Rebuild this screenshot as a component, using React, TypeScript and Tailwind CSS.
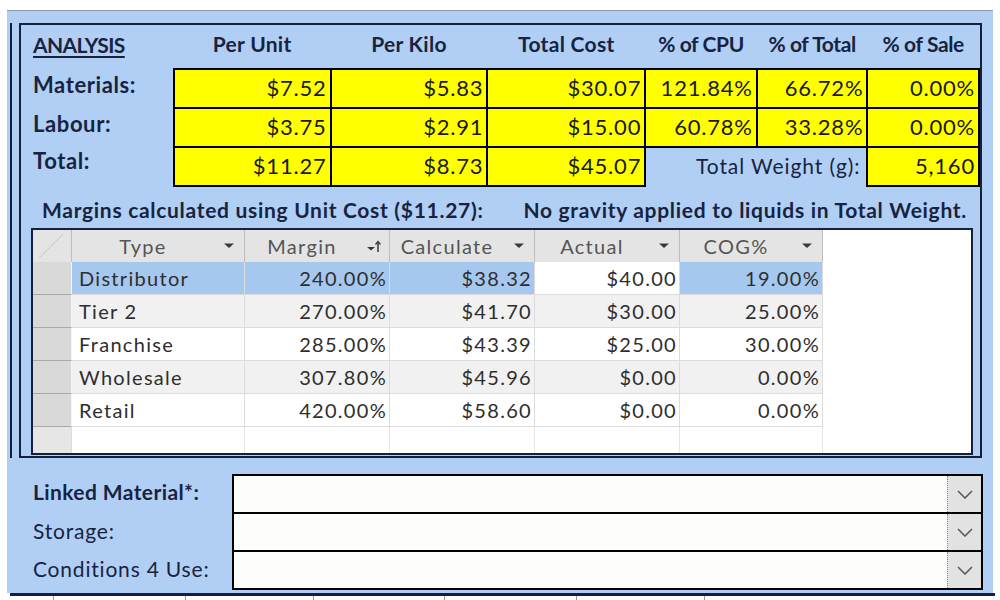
import React from 'react'

const rows = [
  { type: 'Distributor', margin: '240.00%', calc: '$38.32', actual: '$40.00', cog: '19.00%' },
  { type: 'Tier 2', margin: '270.00%', calc: '$41.70', actual: '$30.00', cog: '25.00%' },
  { type: 'Franchise', margin: '285.00%', calc: '$43.39', actual: '$25.00', cog: '30.00%' },
  { type: 'Wholesale', margin: '307.80%', calc: '$45.96', actual: '$0.00', cog: '0.00%' },
  { type: 'Retail', margin: '420.00%', calc: '$58.60', actual: '$0.00', cog: '0.00%' },
]

function Yellow({ children }: { children: React.ReactNode }) {
  return (
    <td className="border-2 border-black bg-[#ffff00] text-right pr-[3px] pb-[2px] text-[22px] font-normal text-[#1a1a1a] tracking-[0.8px]">
      {children}
    </td>
  )
}

function FilterArrow() {
  return (
    <svg width="10" height="6" viewBox="0 0 10 6">
      <polygon points="0,0.5 10,0.5 5,5" fill="#3a3a3a" />
    </svg>
  )
}

function SortArrow() {
  return (
    <svg width="14" height="14" viewBox="0 0 14 14">
      <polygon points="0,8 8,8 4,11.5" fill="#3a3a3a" />
      <line x1="11" y1="3" x2="11" y2="13" stroke="#3a3a3a" strokeWidth="1.5" />
      <polyline points="8.5,5.5 11,2.5 13.5,5.5" fill="none" stroke="#3a3a3a" strokeWidth="1.3" />
    </svg>
  )
}

function HeaderCell({ label, w, sort }: { label: string; w: string; sort?: boolean }) {
  return (
    <div className={`${w} h-full flex items-center border-r border-[#bdbdbd] bg-[#e4e4e4]`}>
      <span className="flex-1 text-center text-[#555555]">{label}</span>
      <span className="w-[30px] flex justify-center">{sort ? <SortArrow /> : <FilterArrow />}</span>
    </div>
  )
}

function Combo({ first }: { first?: boolean }) {
  return (
    <div className={`w-[751px] h-[40px] border-2 border-black bg-[#fdfdfb] flex justify-end ${first ? '' : '-mt-[2px]'}`}>
      <div className="w-[34px] h-full bg-[#e2e2e2] border-l border-dotted border-[#8a8a8a] flex items-center justify-center">
        <svg width="16" height="9" viewBox="0 0 16 9">
          <polyline points="1,1 8,8 15,1" fill="none" stroke="#5a5a5a" strokeWidth="1.6" />
        </svg>
      </div>
    </div>
  )
}

export default function App() {
  return (
    <div className="w-[1000px] h-[600px] bg-white overflow-hidden font-['Lato',sans-serif] text-[#17233f]">
      <div className="h-[10px]" />
      <div className="ml-[7px] w-[986px] h-[583px] bg-[#b1cff4] border-t border-[#8d9bb0]">
        <div className="flex pt-[12px]">
          <div className="ml-[3px] w-[2px] bg-[#14213d]" />
          <div className="ml-[7px] w-[963px] h-[435px] border-2 border-[#14213d] flex flex-col">
            <table className="table-fixed border-collapse text-[21px] leading-none font-bold tracking-[0.3px]">
              <colgroup>
                <col className="w-[152px]" />
                <col className="w-[156px]" />
                <col className="w-[156px]" />
                <col className="w-[157px]" />
                <col className="w-[111px]" />
                <col className="w-[110px]" />
                <col className="w-[111px]" />
              </colgroup>
              <tbody>
                <tr className="h-[44px]">
                  <td className="pl-[12px] pb-[6px] underline underline-offset-[3px] decoration-2 tracking-[-0.6px]">ANALYSIS</td>
                  <td className="text-center pb-[6px]">Per Unit</td>
                  <td className="text-center pb-[6px]">Per Kilo</td>
                  <td className="text-center pb-[6px]">Total Cost</td>
                  <td className="text-center pb-[6px] tracking-[-0.4px]">% of CPU</td>
                  <td className="text-center pb-[6px] tracking-[-0.4px]">% of Total</td>
                  <td className="text-center pb-[6px] tracking-[-0.4px]">% of Sale</td>
                </tr>
                <tr className="h-[39px]">
                  <td className="pl-[12px] pb-[8px] text-[22px] tracking-[0.6px]">Materials:</td>
                  <Yellow>$7.52</Yellow>
                  <Yellow>$5.83</Yellow>
                  <Yellow>$30.07</Yellow>
                  <Yellow>121.84%</Yellow>
                  <Yellow>66.72%</Yellow>
                  <Yellow>0.00%</Yellow>
                </tr>
                <tr className="h-[39px]">
                  <td className="pl-[12px] pb-[8px] text-[22px] tracking-[0.6px]">Labour:</td>
                  <Yellow>$3.75</Yellow>
                  <Yellow>$2.91</Yellow>
                  <Yellow>$15.00</Yellow>
                  <Yellow>60.78%</Yellow>
                  <Yellow>33.28%</Yellow>
                  <Yellow>0.00%</Yellow>
                </tr>
                <tr className="h-[39px]">
                  <td className="pl-[12px] pb-[12px] text-[22px] tracking-[0.6px]">Total:</td>
                  <Yellow>$11.27</Yellow>
                  <Yellow>$8.73</Yellow>
                  <Yellow>$45.07</Yellow>
                  <td colSpan={2} className="text-right pr-[6px] pb-[4px] font-normal text-[21px] tracking-[0.9px]">Total Weight (g):</td>
                  <Yellow>5,160</Yellow>
                </tr>
              </tbody>
            </table>

            <div className="h-[41px] flex items-center justify-between pl-[21px] pr-[13px] pt-[4px] text-[21px] font-bold tracking-[0.7px]">
              <span>Margins calculated using Unit Cost ($11.27):</span>
              <span>No gravity applied to liquids in Total Weight.</span>
            </div>

            <div className="ml-[10px] w-[942px] h-[227px] border-2 border-[#14213d] bg-white flex flex-col overflow-hidden text-[20px] font-normal text-[#2e2e2e] tracking-[1.3px]">
              <div className="h-[32px] flex shrink-0">
                <div className="w-[39px] h-full bg-[#e4e4e4] border-r border-[#bdbdbd] relative overflow-hidden">
                  <svg width="39" height="32" className="absolute left-0 top-0">
                    <line x1="6" y1="28" x2="30" y2="4" stroke="#c8c8c8" strokeWidth="1" />
                  </svg>
                </div>
                <HeaderCell label="Type" w="w-[173px]" />
                <HeaderCell label="Margin" w="w-[145px]" sort />
                <HeaderCell label="Calculate" w="w-[145px]" />
                <HeaderCell label="Actual" w="w-[145px]" />
                <HeaderCell label="COG%" w="w-[143px]" />
                <div className="flex-1" />
              </div>
              {rows.map((r, i) => {
                const sel = i === 0
                const bg = sel ? 'bg-[#a7c8ee]' : i % 2 === 1 ? 'bg-[#f1f1f1]' : 'bg-white'
                return (
                  <div key={r.type} className="h-[33px] flex shrink-0">
                    <div className="w-[39px] h-full bg-[#d9d9d9] border-b border-[#a9a9a9] border-r border-r-[#f4f4f4]" />
                    <div className={`w-[173px] h-full flex items-center pl-[7px] border-r border-b border-[#dcdcdc] ${bg}`}>{r.type}</div>
                    <div className={`w-[145px] h-full flex items-center justify-end pr-[2px] border-r border-b border-[#dcdcdc] ${bg}`}>{r.margin}</div>
                    <div className={`w-[145px] h-full flex items-center justify-end pr-[2px] border-r border-b border-[#dcdcdc] ${bg}`}>{r.calc}</div>
                    <div className={`w-[145px] h-full flex items-center justify-end pr-[2px] border-r border-b border-[#dcdcdc] ${sel ? 'bg-white' : bg}`}>{r.actual}</div>
                    <div className={`w-[143px] h-full flex items-center justify-end pr-[2px] border-r border-b border-[#dcdcdc] ${bg}`}>{r.cog}</div>
                    <div className="flex-1 bg-white" />
                  </div>
                )
              })}
              <div className="flex-1 flex">
                <div className="w-[39px] h-full bg-[#e6e6e6] border-r border-[#dcdcdc]" />
                <div className="w-[173px] h-full border-r border-[#e6e6e6]" />
                <div className="w-[145px] h-full border-r border-[#e6e6e6]" />
                <div className="w-[145px] h-full border-r border-[#e6e6e6]" />
                <div className="w-[145px] h-full border-r border-[#e6e6e6]" />
                <div className="w-[143px] h-full border-r border-[#e6e6e6]" />
                <div className="flex-1" />
              </div>
            </div>
          </div>
        </div>

        <div className="pt-[16px] flex flex-col text-[21px] tracking-[0.8px]">
          {[
            { label: 'Linked Material*:', bold: true },
            { label: 'Storage:', bold: false },
            { label: 'Conditions 4 Use:', bold: false },
          ].map((f, i) => (
            <div key={f.label} className="flex items-center">
              <div className={`w-[225px] pl-[26px] pb-[5px] ${f.bold ? 'font-bold tracking-[0.4px]' : 'font-normal'}`}>{f.label}</div>
              <Combo first={i === 0} />
            </div>
          ))}
        </div>
      </div>
      <div className="ml-[10px] w-[985px] h-[3px] bg-[#14213d]" />
      <div className="ml-[10px] w-[985px] h-[4px] flex">
        <div className="w-[44px] border-r border-[#9a9a9a]" />
        <div className="w-[132px] border-r border-[#9a9a9a]" />
        <div className="w-[128px] border-r border-[#9a9a9a]" />
        <div className="w-[131px] border-r border-[#9a9a9a]" />
        <div className="w-[132px] border-r border-[#9a9a9a]" />
        <div className="w-[128px] border-r border-[#9a9a9a]" />
      </div>
    </div>
  )
}
